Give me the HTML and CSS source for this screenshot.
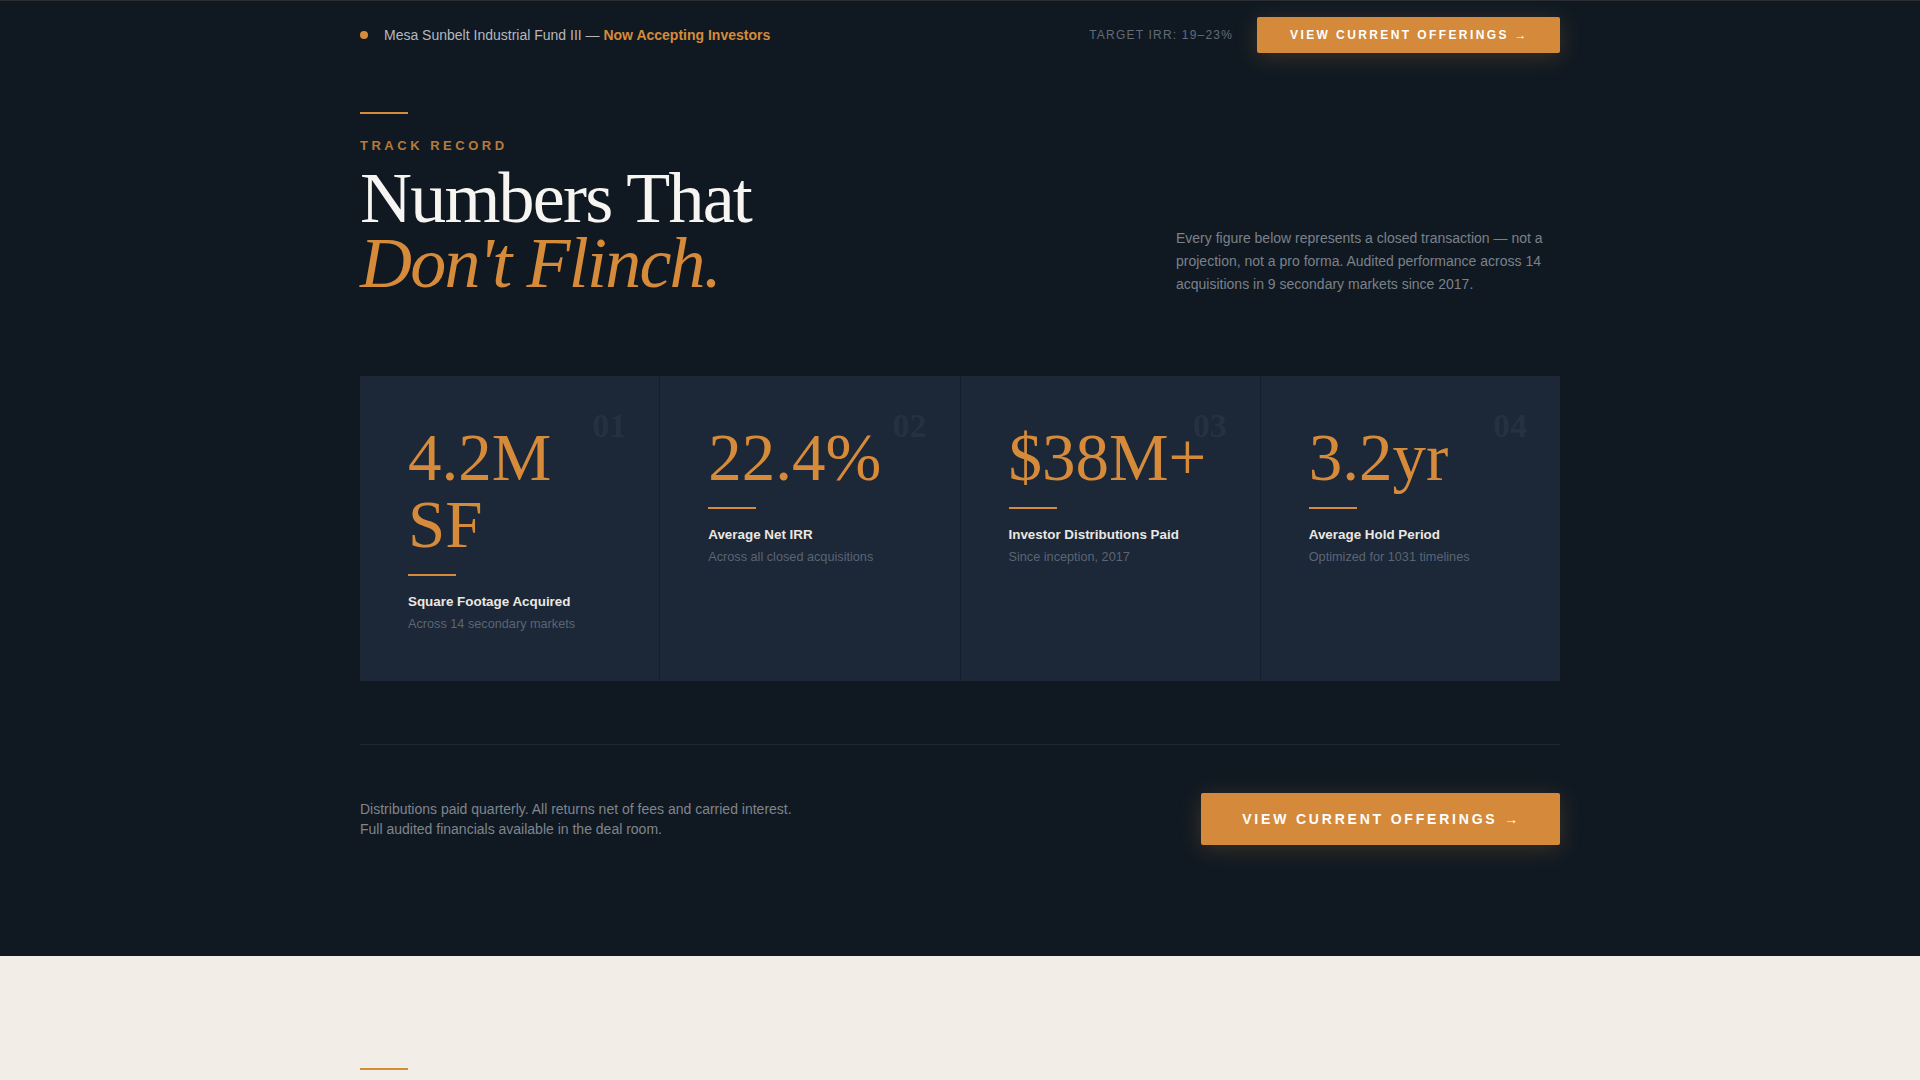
FILE: index.html
```html
<!DOCTYPE html>
<html>
<head>
    <title>Track Record</title>
    <link rel="stylesheet" href="styles.css">
</head>

<body>
    <section class="stats">
        <div class="container">

            <div class="topbar">
                <div class="fund">
                    <span class="dot"></span>
                    <span>Mesa Sunbelt Industrial Fund III — <strong>Now Accepting Investors</strong></span>
                </div>
                <div class="topbar-right">
                    <span class="target">TARGET IRR: 19–23%</span>
                    <a class="btn btn-small" href="#">VIEW CURRENT OFFERINGS →</a>
                </div>
            </div>

            <div class="intro">
                <div class="intro-title">
                    <div class="rule"></div>
                    <p class="eyebrow">TRACK RECORD</p>
                    <h1>Numbers That<br><em>Don't Flinch.</em></h1>
                </div>
                <p class="intro-text">Every figure below represents a closed transaction — not a projection, not a pro forma. Audited performance across 14 acquisitions in 9 secondary markets since 2017.</p>
            </div>

            <div class="grid">
                <div class="card">
                    <span class="num">01</span>
                    <div class="value">4.2M SF</div>
                    <div class="bar"></div>
                    <h3>Square Footage Acquired</h3>
                    <p>Across 14 secondary markets</p>
                </div>
                <div class="card">
                    <span class="num">02</span>
                    <div class="value">22.4%</div>
                    <div class="bar"></div>
                    <h3>Average Net IRR</h3>
                    <p>Across all closed acquisitions</p>
                </div>
                <div class="card">
                    <span class="num">03</span>
                    <div class="value">$38M+</div>
                    <div class="bar"></div>
                    <h3>Investor Distributions Paid</h3>
                    <p>Since inception, 2017</p>
                </div>
                <div class="card">
                    <span class="num">04</span>
                    <div class="value">3.2yr</div>
                    <div class="bar"></div>
                    <h3>Average Hold Period</h3>
                    <p>Optimized for 1031 timelines</p>
                </div>
            </div>

            <div class="foot">
                <p>Distributions paid quarterly. All returns net of fees and carried interest.<br>
                Full audited financials available in the deal room.</p>
                <a class="btn btn-large" href="#">VIEW CURRENT OFFERINGS →</a>
            </div>

        </div>
    </section>

    <section class="next">
        <div class="container">
            <div class="rule"></div>
        </div>
    </section>
</body>
</html>
```

FILE: styles.css
```css
body {
    margin: 0;
    font-family: "Liberation Sans", Arial, sans-serif;
    background: #f2ede6;
}

.container {
    width: 1200px;
    margin: 0 auto;
}

.stats {
    background: #101922;
    border-top: 1px solid #2a2e33;
    padding-bottom: 111px;
}

/* top strip */
.topbar {
    height: 68px;
    display: flex;
    align-items: center;
    justify-content: space-between;
}

.fund {
    display: flex;
    align-items: center;
    gap: 16px;
    font-size: 14px;
    color: #b4b8be;
}

.fund strong {
    color: #d68b3b;
}

.dot {
    width: 8px;
    height: 8px;
    border-radius: 50%;
    background: #d68b3b;
}

.topbar-right {
    display: flex;
    align-items: center;
    gap: 24px;
}

.target {
    font-size: 12px;
    letter-spacing: 0.1em;
    color: #636b76;
}

.btn {
    display: inline-block;
    background: #d48a3a;
    color: #fff;
    font-weight: bold;
    text-decoration: none;
    letter-spacing: 0.2em;
    border-radius: 2px;
    box-shadow: 0 4px 22px rgba(214, 139, 59, 0.22);
}

.btn-small {
    font-size: 12px;
    line-height: 14px;
    padding: 11px 31px 11px 33px;
}

.btn-large {
    font-size: 14px;
    line-height: 16px;
    padding: 18px 39px 18px 41px;
}

/* heading block */
.intro {
    display: flex;
    justify-content: space-between;
    align-items: flex-end;
    margin-top: 43px;
    margin-bottom: 80px;
}

.rule {
    width: 48px;
    height: 2px;
    background: #d68b3b;
}

.eyebrow {
    margin: 24px 0 12px;
    font-size: 13px;
    line-height: 16px;
    font-weight: bold;
    letter-spacing: 0.27em;
    color: #b8793a;
}

h1 {
    margin: 0;
    font-family: "Liberation Serif", "Times New Roman", serif;
    font-weight: normal;
    font-size: 72px;
    line-height: 0.9;
    letter-spacing: -0.025em;
    color: #f7f5f1;
}

h1 em {
    color: #d68b3b;
}

.intro-text {
    width: 384px;
    margin: 0;
    font-size: 14px;
    line-height: 23px;
    color: #7b818a;
}

/* stat cards */
.grid {
    display: grid;
    grid-template-columns: repeat(4, 1fr);
    gap: 1px;
    background: #151e2a;
}

.card {
    position: relative;
    background: #1c2737;
    padding: 48px;
}

.num {
    position: absolute;
    top: 33px;
    right: 33px;
    font-family: "Liberation Serif", serif;
    font-weight: bold;
    font-size: 34px;
    line-height: 1;
    color: #263140;
}

.value {
    font-family: "Liberation Serif", "Times New Roman", serif;
    font-size: 67px;
    line-height: 1;
    color: #d68b3b;
}

.bar {
    width: 48px;
    height: 2px;
    margin: 16px 0 16px;
    background: #d68b3b;
}

.card h3 {
    margin: 0 0 3px;
    font-size: 13.4px;
    line-height: 20px;
    color: #ece8e1;
}

.card p {
    margin: 0;
    font-size: 12.7px;
    line-height: 18px;
    color: #5b6574;
}

/* bottom row */
.foot {
    margin-top: 63px;
    border-top: 1px solid #1c2530;
    padding-top: 48px;
    display: flex;
    align-items: center;
    justify-content: space-between;
}

.foot p {
    margin: 0;
    font-size: 14px;
    line-height: 20px;
    color: #7f858d;
}

/* next section */
.next {
    background: #f2ede6;
    padding-top: 112px;
    height: 200px;
}
```
